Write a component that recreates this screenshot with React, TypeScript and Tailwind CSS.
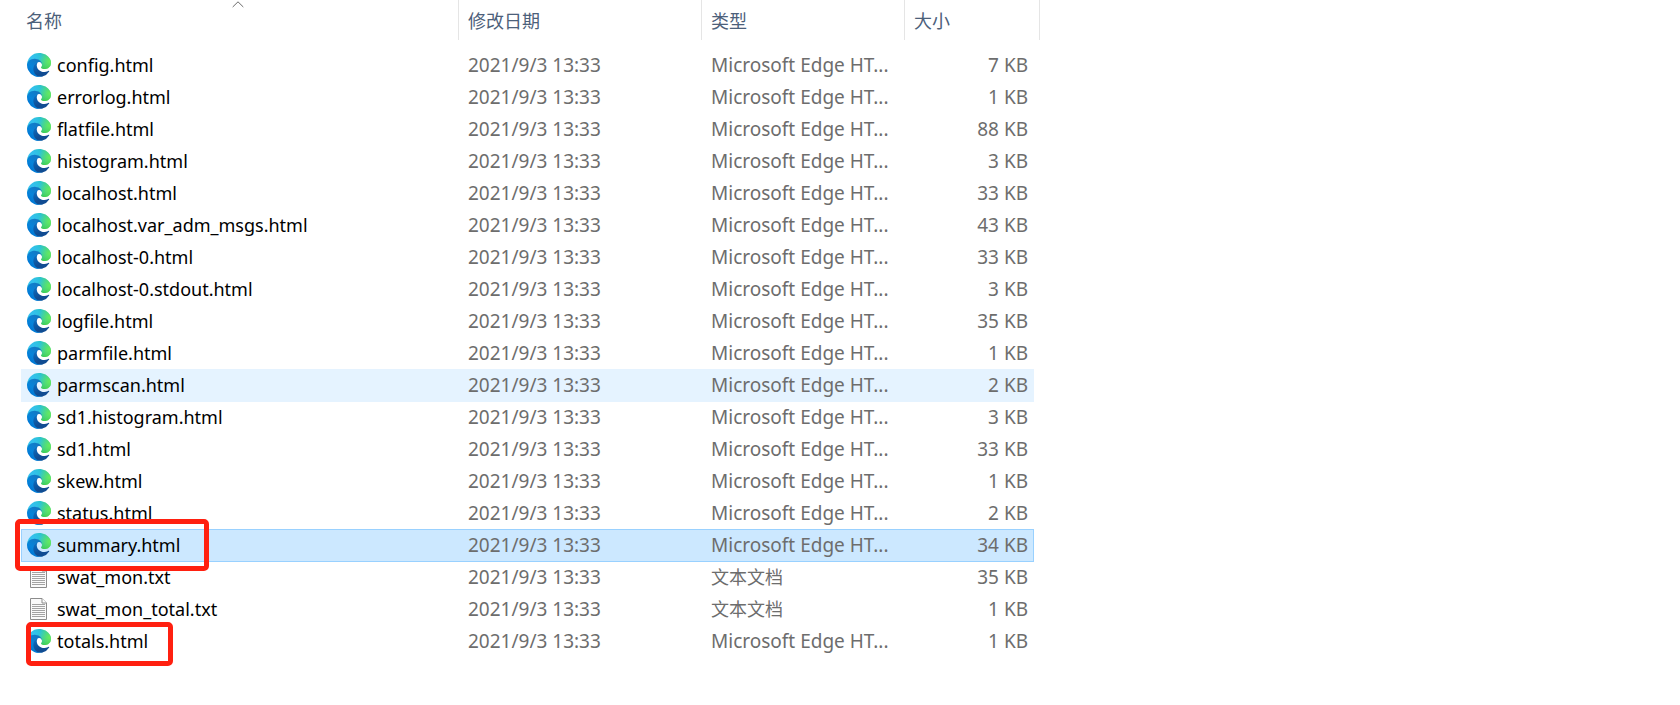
type Kind = 'html' | 'txt';

interface FileEntry {
  name: string;
  size: string;
  kind: Kind;
  state?: 'hover' | 'selected';
  mark?: string;
}

const MODIFIED = '2021/9/3 13:33';

const files: FileEntry[] = [
  { name: 'config.html', size: '7 KB', kind: 'html' },
  { name: 'errorlog.html', size: '1 KB', kind: 'html' },
  { name: 'flatfile.html', size: '88 KB', kind: 'html' },
  { name: 'histogram.html', size: '3 KB', kind: 'html' },
  { name: 'localhost.html', size: '33 KB', kind: 'html' },
  { name: 'localhost.var_adm_msgs.html', size: '43 KB', kind: 'html' },
  { name: 'localhost-0.html', size: '33 KB', kind: 'html' },
  { name: 'localhost-0.stdout.html', size: '3 KB', kind: 'html' },
  { name: 'logfile.html', size: '35 KB', kind: 'html' },
  { name: 'parmfile.html', size: '1 KB', kind: 'html' },
  { name: 'parmscan.html', size: '2 KB', kind: 'html', state: 'hover' },
  { name: 'sd1.histogram.html', size: '3 KB', kind: 'html' },
  { name: 'sd1.html', size: '33 KB', kind: 'html' },
  { name: 'skew.html', size: '1 KB', kind: 'html' },
  { name: 'status.html', size: '2 KB', kind: 'html' },
  {
    name: 'summary.html',
    size: '34 KB',
    kind: 'html',
    state: 'selected',
    mark: '-left-[6px] -top-[10px] h-[52px] w-[194px]',
  },
  { name: 'swat_mon.txt', size: '35 KB', kind: 'txt' },
  { name: 'swat_mon_total.txt', size: '1 KB', kind: 'txt' },
  { name: 'totals.html', size: '1 KB', kind: 'html', mark: 'left-[5px] -top-[3px] h-[44px] w-[147px]' },
];

const cellState = {
  none: '',
  hover: 'bg-[#e5f3ff] shadow-[0_1px_0_#e5f3ff]',
  selected: 'bg-[#cce8ff] shadow-[0_1px_0_#99d1ff,inset_0_1px_0_#99d1ff]',
};

function EdgeGradients() {
  return (
    <svg className="absolute size-0" aria-hidden="true">
      <defs>
        <linearGradient id="edge-a" x1="70" y1="95" x2="130" y2="215" gradientUnits="userSpaceOnUse">
          <stop offset="0" stopColor="#1278cc" />
          <stop offset="0.5" stopColor="#0c5fae" />
          <stop offset="1" stopColor="#104c92" />
        </linearGradient>
        <linearGradient id="edge-b" x1="153" y1="100" x2="46" y2="216" gradientUnits="userSpaceOnUse">
          <stop offset="0" stopColor="#1577c0" />
          <stop offset="0.3" stopColor="#0f7dcc" />
          <stop offset="0.67" stopColor="#0684da" />
          <stop offset="1" stopColor="#0078d4" />
        </linearGradient>
        <radialGradient
          id="edge-c"
          cx="0"
          cy="0"
          r="203"
          gradientTransform="matrix(-.04 1 -2.13 -.08 26 45)"
          gradientUnits="userSpaceOnUse"
        >
          <stop offset="0" stopColor="#35c1f1" />
          <stop offset="0.11" stopColor="#34c1ed" />
          <stop offset="0.23" stopColor="#2fc2df" />
          <stop offset="0.31" stopColor="#2bc3d2" />
          <stop offset="0.67" stopColor="#36c752" />
        </radialGradient>
        <radialGradient id="edge-d" cx="240" cy="90" r="120" gradientUnits="userSpaceOnUse">
          <stop offset="0" stopColor="#66eb5e" />
          <stop offset="1" stopColor="#66eb6e" stopOpacity="0" />
        </radialGradient>
      </defs>
    </svg>
  );
}

const EDGE_SWOOSH =
  'M152.33 148.86c-.81 1.05-3.3 2.5-3.3 5.66 0 2.61 1.7 5.12 4.72 7.23 14.38 10 41.49 8.68 41.56 8.68a59.56 59.56 0 0 0 30.27-8.35A61.38 61.38 0 0 0 256 109.19c.26-22.41-8-37.31-11.34-43.91C223.46 23.84 177.72 0 128 0A128 128 0 0 0 0 126.2c.48-36.54 36.8-66.05 80-66.05 3.5 0 23.46.34 42 10.07 16.34 8.58 24.9 18.94 30.85 29.21 6.18 10.67 7.28 24.15 7.28 29.52s-2.74 13.33-7.8 19.91z';

function EdgeIcon() {
  return (
    <svg viewBox="0 0 256 256" className="size-6 shrink-0" aria-hidden="true">
      <path
        fill="url(#edge-a)"
        d="M231.07 190.54c-3.42 1.78-6.94 3.36-10.55 4.73a101.73 101.73 0 0 1-35.9 6.46c-47.32 0-80.54-32.55-80.54-72.32a31.48 31.48 0 0 1 14.43-27.31c-48.8-.2-59.8 44.4-59.8 70.53 0 73.88 68.09 81.37 82.76 81.37 7.91 0 19.84-2.3 27-4.56l1.31-.44a128.34 128.34 0 0 0 66.6-52.8 4 4 0 0 0-5.31-5.66z"
      />
      <path
        fill="url(#edge-b)"
        d="M105.73 241.42a79.2 79.2 0 0 1-22.74-21.34 80.72 80.72 0 0 1 29.53-120c3.12-1.47 8.45-4.13 15.54-4a32.35 32.35 0 0 1 25.69 13 31.88 31.88 0 0 1 6.36 18.66c0-.21 24.46-79.6-80-79.6-43.9 0-80 41.66-80 78.21a130.15 130.15 0 0 0 12.11 56 128 128 0 0 0 156.38 67.11 75.55 75.55 0 0 1-62.78-8z"
      />
      <path fill="url(#edge-c)" d={EDGE_SWOOSH} />
      <path fill="url(#edge-d)" d={EDGE_SWOOSH} />
    </svg>
  );
}

function TextIcon() {
  return (
    <svg viewBox="0 0 24 24" className="size-6 shrink-0" aria-hidden="true">
      <path d="M3.5 1.5H15l4.500 4.500V22.500H3.500Z" fill="#fafafa" stroke="#8c8c8c" />
      <path d="M15 1.500V6H19.500" fill="#fff" stroke="#8c8c8c" />
      <path
        d="M5 7.500H18M5 9.500H18M5 11.500H18M5 13.500H18M5 15.500H18M5 17.500H18M5 19.500H18"
        stroke="#a3a3a3"
        fill="none"
      />
    </svg>
  );
}

const headings = ['名称', '修改日期', '类型', '大小'];

export default function App() {
  return (
    <main className="min-h-screen bg-white pl-[21px] font-['Noto_Sans','Noto_Sans_CJK_SC',sans-serif] text-[19px] leading-6 text-[#6d6d6d]">
      <EdgeGradients />
      <table className="w-[1019px] table-fixed border-separate border-spacing-0">
        <colgroup>
          <col className="w-[438px]" />
          <col className="w-[243px]" />
          <col className="w-[203px]" />
          <col />
          <col className="w-[6px]" />
        </colgroup>
        <thead>
          <tr>
            {headings.map((label, i) => (
              <th
                key={label}
                scope="col"
                colSpan={i === 3 ? 2 : 1}
                aria-sort={i === 0 ? 'ascending' : undefined}
                className="relative h-10 border-r border-[#e5e5e5] p-0 font-normal"
              >
                <button
                  type="button"
                  className={`block h-10 w-full pt-[2px] text-left text-lg text-[#4c607a] ${i === 0 ? 'pl-[5px]' : 'pl-[9px]'}`}
                >
                  {label}
                </button>
                {i === 0 && (
                  <svg
                    viewBox="0 0 12 7"
                    className="absolute left-[211px] top-px h-[7px] w-3"
                    fill="none"
                    stroke="#6b6b6b"
                    aria-hidden="true"
                  >
                    <path d="M.7 6 6 .8 11.300 6" />
                  </svg>
                )}
              </th>
            ))}
          </tr>
          <tr aria-hidden="true">
            <td colSpan={5} className="h-[9px] p-0" />
          </tr>
        </thead>
        <tbody>
          {files.map((file) => {
            const look = cellState[file.state ?? 'none'];
            const selected = file.state === 'selected';
            return (
              <tr key={file.name} aria-selected={selected}>
                <td
                  className={`relative h-8 p-0 pl-[6px] text-lg leading-6 text-black ${
                    selected
                      ? 'bg-[#cce8ff] shadow-[0_1px_0_#99d1ff,inset_1px_1px_0_#99d1ff]'
                      : look
                  }`}
                >
                  <div className="flex items-center gap-[6px]">
                    {file.kind === 'html' ? <EdgeIcon /> : <TextIcon />}
                    <span>{file.name}</span>
                  </div>
                  {file.mark && (
                    <span
                      className={`pointer-events-none absolute z-10 rounded-[5px] border-5 border-[#ff2010] ${file.mark}`}
                    />
                  )}
                </td>
                <td className={`h-8 p-0 pl-[9px] ${look}`}>{MODIFIED}</td>
                <td className={`h-8 p-0 pl-[9px] ${look}`}>
                  {file.kind === 'html' ? 'Microsoft Edge HT...' : <span className="block text-lg leading-6">文本文档</span>}
                </td>
                <td
                  className={`h-8 p-0 pr-[6px] text-right ${
                    selected
                      ? 'bg-[#cce8ff] shadow-[0_1px_0_#99d1ff,inset_-1px_1px_0_#99d1ff]'
                      : look
                  }`}
                >
                  {file.size}
                </td>
                <td className="p-0" />
              </tr>
            );
          })}
        </tbody>
      </table>
    </main>
  );
}
